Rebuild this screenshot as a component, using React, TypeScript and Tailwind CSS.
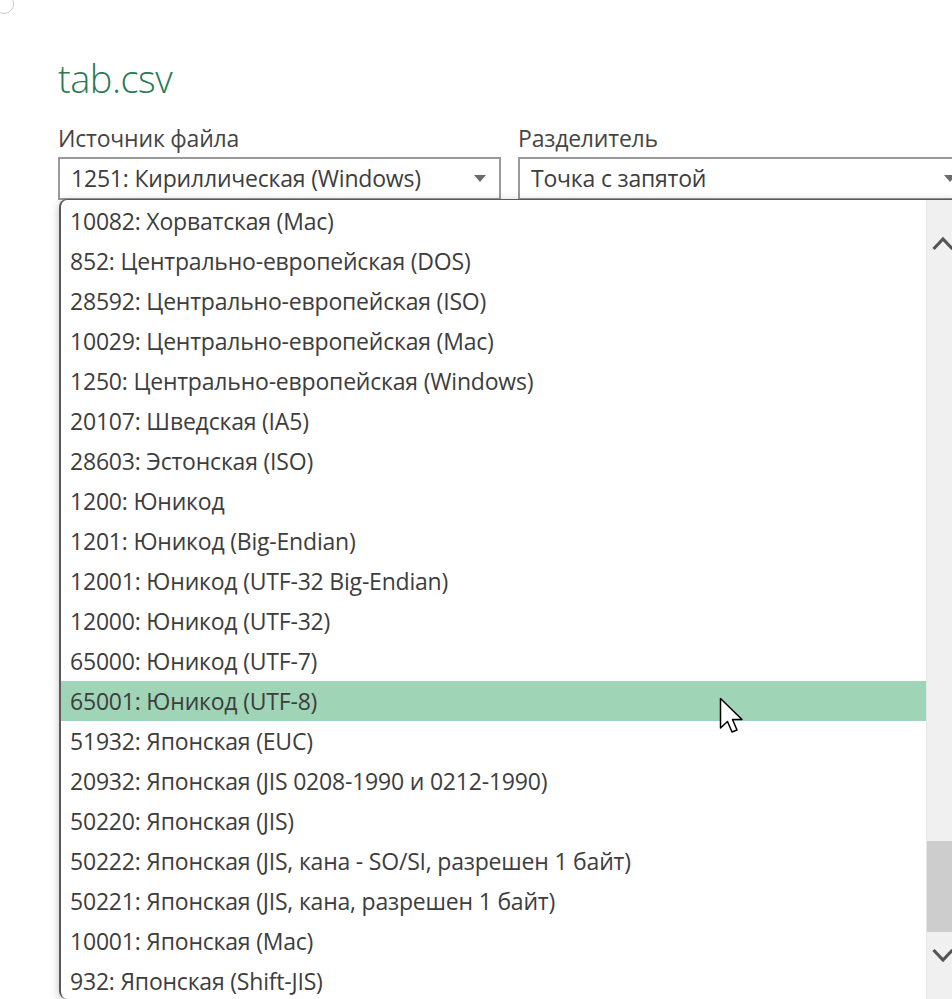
import React from "react";

const encodings = [
  "10082: Хорватская (Mac)",
  "852: Центрально-европейская (DOS)",
  "28592: Центрально-европейская (ISO)",
  "10029: Центрально-европейская (Mac)",
  "1250: Центрально-европейская (Windows)",
  "20107: Шведская (IA5)",
  "28603: Эстонская (ISO)",
  "1200: Юникод",
  "1201: Юникод (Big-Endian)",
  "12001: Юникод (UTF-32 Big-Endian)",
  "12000: Юникод (UTF-32)",
  "65000: Юникод (UTF-7)",
  "65001: Юникод (UTF-8)",
  "51932: Японская (EUC)",
  "20932: Японская (JIS 0208-1990 и 0212-1990)",
  "50220: Японская (JIS)",
  "50222: Японская (JIS, кана - SO/SI, разрешен 1 байт)",
  "50221: Японская (JIS, кана, разрешен 1 байт)",
  "10001: Японская (Mac)",
  "932: Японская (Shift-JIS)",
];

const SELECTED = "65001: Юникод (UTF-8)";

function Caret() {
  return (
    <svg width="12" height="7" viewBox="0 0 12 7" className="shrink-0">
      <path d="M0 0 L12 0 L6 7 Z" fill="#6b6b6b" />
    </svg>
  );
}

function Chevron({ up }: { up?: boolean }) {
  return (
    <svg width="22" height="17" viewBox="0 0 22 17" className="shrink-0">
      <path
        d={up ? "M1.5 15 L11 5 L20.5 15" : "M1.5 2 L11 12 L20.5 2"}
        fill="none"
        stroke="#555"
        strokeWidth="3.2"
      />
    </svg>
  );
}

function Pointer() {
  return (
    <svg width="28" height="40" viewBox="0 0 28 40">
      <path
        d="M1.5 1.5 L1.5 31 L8.5 24.5 L13 35 L18 33 L13.5 22.5 L23 22.5 Z"
        fill="#fff"
        stroke="#000"
        strokeWidth="1.5"
        strokeLinejoin="round"
      />
    </svg>
  );
}

export default function App() {
  return (
    <div
      className="relative w-[952px] h-[999px] overflow-hidden bg-white text-[#3d3d3d]"
      style={{ fontFamily: '"Open Sans", "Noto Sans", sans-serif' }}
    >
      {/* dialog corner */}
      <div className="absolute -left-[6px] -top-[6px] w-[20px] h-[20px] rounded-[10px] border border-[#c9c9c9]" />

      <div className="pl-[58px] pt-[52px]">
        <h1 className="text-[38px] leading-[52px] font-light text-[#2c7a55] tracking-[-0.5px]">
          tab.csv
        </h1>

        <div className="mt-[20px] flex gap-[17px]">
          <div className="w-[443px] shrink-0">
            <div className="text-[23px] leading-[28px] text-[#454545] tracking-[-0.2px]">
              Источник файла
            </div>
            <div className="mt-[5px] h-[43px] border-2 border-[#9a9a9a] flex items-center justify-between pl-[11px] pr-[13px]">
              <span className="text-[23px] tracking-[-0.2px]">1251: Кириллическая (Windows)</span>
              <Caret />
            </div>
          </div>
          <div className="w-[450px] shrink-0">
            <div className="text-[23px] leading-[28px] text-[#454545] tracking-[-0.2px]">
              Разделитель
            </div>
            <div className="mt-[5px] h-[43px] border-2 border-[#9a9a9a] flex items-center justify-between pl-[11px] pr-[10px]">
              <span className="text-[23px] tracking-[-0.2px]">Точка с запятой</span>
              <Caret />
            </div>
          </div>
        </div>
      </div>

      {/* open encoding list */}
      <div className="absolute left-[59px] top-[199px] w-[900px] h-[800px] bg-white rounded-[8px] border-l-2 border-t border-[#5a5a5a] shadow-[0_2px_8px_rgba(0,0,0,0.25)] flex overflow-hidden">
        <ul className="flex-1 pt-[1px]">
          {encodings.map((e) => (
            <li
              key={e}
              className={`h-[40px] flex items-center pl-[9px] text-[23px] tracking-[-0.2px] whitespace-nowrap ${
                e === SELECTED ? "bg-[#9fd4b7]" : ""
              }`}
            >
              {e}
            </li>
          ))}
        </ul>
        <div className="w-[32px] shrink-0 mr-[1px] bg-[#f0f0f0] border-l border-[#e6e6e6] flex flex-col items-center">
          <div className="h-[51px] flex items-end justify-center">
            <Chevron up />
          </div>
          <div className="flex-1" />
          <div className="w-full h-[91px] bg-[#cdcdcd]" />
          <div className="h-[16px]" />
          <Chevron />
          <div className="h-[34px]" />
        </div>
      </div>

      <div className="absolute left-[719px] top-[697px]">
        <Pointer />
      </div>
    </div>
  );
}
